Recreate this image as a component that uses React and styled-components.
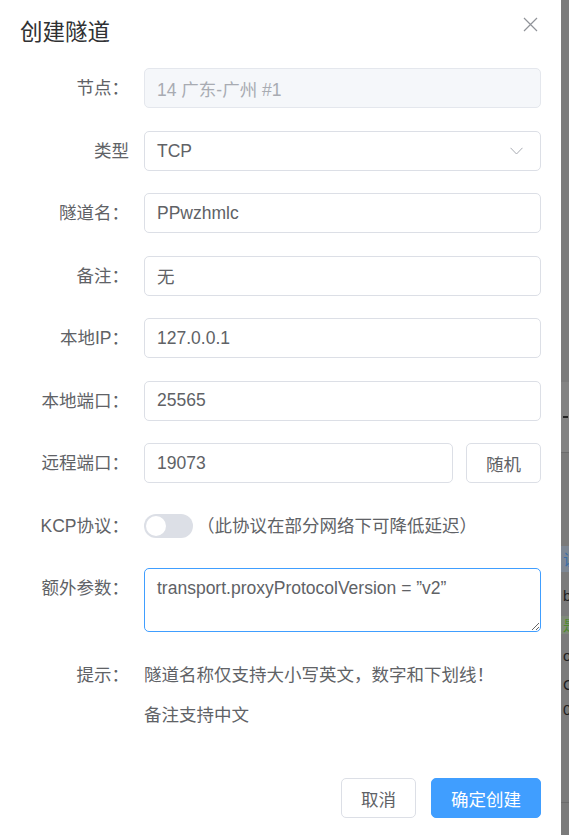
import React from 'react';
import styled, { createGlobalStyle } from 'styled-components';

const Global = createGlobalStyle`
  html, body { margin: 0; padding: 0; }
  body {
    font-family: "Liberation Sans", "Noto Sans CJK SC", sans-serif;
    background: #7b7b7b;
  }
`;

const Screen = styled.div`
  display: flex;
  height: 835px;
  overflow: hidden;
`;

const Dialog = styled.div`
  width: 561px;
  flex: none;
  background: #fff;
  display: flex;
  flex-direction: column;
`;

const Header = styled.div`
  position: relative;
  padding: 18px 20px 20px;
`;

const Title = styled.div`
  font-size: 22.5px;
  line-height: 30px;
  color: #303133;
`;

const Close = styled.button`
  position: absolute;
  top: 17px;
  right: 23px;
  width: 15px;
  height: 15px;
  padding: 0;
  border: 0;
  background: none;
  display: flex;
  cursor: pointer;
`;

const Body = styled.div`
  padding: 0 20px;
`;

const Item = styled.div`
  display: flex;
  align-items: flex-start;
  margin-bottom: 22.5px;
`;

const Label = styled.label`
  width: 124px;
  flex: none;
  box-sizing: border-box;
  padding-right: 15px;
  text-align: right;
  font-size: 17.5px;
  line-height: 40px;
  color: #606266;
`;

const Content = styled.div`
  flex: 1;
  min-width: 0;
  display: flex;
  flex-direction: ${p => (p.$column ? 'column' : 'row')};
  align-items: ${p => (p.$column ? 'flex-start' : 'center')};
  min-height: 40px;
  gap: ${p => (p.$column ? '0' : '13px')};
  font-size: 17.5px;
  line-height: 40px;
  color: #606266;
`;

const Field = styled.input`
  flex: 1;
  min-width: 0;
  box-sizing: border-box;
  height: 40px;
  padding: 0 12px;
  border: 1px solid ${p => (p.$disabled ? '#e4e7ed' : '#dcdfe6')};
  border-radius: 5px;
  background: ${p => (p.$disabled ? '#f5f7fa' : '#fff')};
  color: ${p => (p.$disabled ? '#a8abb2' : '#606266')};
  font-family: inherit;
  font-size: 17.5px;
  outline: none;
`;

const Select = styled.div`
  flex: 1;
  box-sizing: border-box;
  height: 40px;
  padding: 0 17px 0 12px;
  border: 1px solid #dcdfe6;
  border-radius: 5px;
  display: flex;
  align-items: center;
  justify-content: space-between;
  color: #606266;
  font-size: 17.5px;
`;

const Area = styled.textarea`
  flex: 1;
  box-sizing: border-box;
  height: 64px;
  padding: 6px 12px;
  border: 1px solid #409eff;
  border-radius: 5px;
  resize: vertical;
  color: #606266;
  font-family: inherit;
  font-size: 17.5px;
  line-height: 1.5;
  outline: none;
`;

const Switch = styled.span`
  position: relative;
  flex: none;
  width: 49px;
  height: 24px;
  border-radius: 12px;
  background: #dcdfe6;
  &::after {
    content: '';
    position: absolute;
    top: 2px;
    left: 2px;
    width: 20px;
    height: 20px;
    border-radius: 50%;
    background: #fff;
  }
`;

const SwitchText = styled.span`
  margin-left: -9px;
  color: #606266;
`;

const Button = styled.button`
  flex: none;
  box-sizing: border-box;
  height: 40px;
  padding: 0 19px;
  border-radius: 5px;
  border: 1px solid ${p => (p.$primary ? '#409eff' : '#dcdfe6')};
  background: ${p => (p.$primary ? '#409eff' : '#fff')};
  color: ${p => (p.$primary ? '#fff' : '#606266')};
  font-family: inherit;
  font-size: 17.5px;
  cursor: pointer;
`;

const Footer = styled.div`
  display: flex;
  justify-content: flex-end;
  gap: 15px;
  padding: 21px 20px 20px;
`;

const Strip = styled.div`
  flex: 1;
  overflow: hidden;
  display: flex;
  flex-direction: column;
  background: #7b7b7b;
`;

const Band = styled.div`
  flex: none;
  height: ${p => p.$h}px;
  background: ${p => p.$bg || 'transparent'};
  border-bottom: ${p => (p.$line ? '1px solid #6c6c6c' : '0')};
  display: flex;
  align-items: center;
  padding-left: ${p => p.$pl || 2}px;
  font-size: 15px;
  line-height: 1;
  color: ${p => p.$c || '#1e1e1e'};
  white-space: nowrap;
`;

const Dash = styled.span`
  width: 5px;
  height: 2px;
  background: #222;
`;

const fields = [
  { label: '隧道名：', value: 'PPwzhmlc' },
  { label: '备注：', value: '无' },
  { label: '本地IP：', value: '127.0.0.1' },
  { label: '本地端口：', value: '25565' },
];

export default function App() {
  return (
    <Screen>
      <Global />
      <Dialog>
        <Header>
          <Title>创建隧道</Title>
          <Close aria-label="close">
            <svg width="15" height="15" viewBox="0 0 15 15">
              <path d="M1 1 L14 14 M14 1 L1 14" stroke="#909399" strokeWidth="1.2" fill="none" />
            </svg>
          </Close>
        </Header>
        <Body>
          <Item>
            <Label>节点：</Label>
            <Content>
              <Field $disabled readOnly defaultValue="14 广东-广州 #1" />
            </Content>
          </Item>
          <Item>
            <Label>类型</Label>
            <Content>
              <Select>
                <span>TCP</span>
                <svg width="13" height="8" viewBox="0 0 13 8">
                  <path d="M0.5 0.8 L6.5 7 L12.5 0.8" stroke="#a8abb2" strokeWidth="1" fill="none" />
                </svg>
              </Select>
            </Content>
          </Item>
          {fields.map(f => (
            <Item key={f.label}>
              <Label>{f.label}</Label>
              <Content>
                <Field readOnly defaultValue={f.value} />
              </Content>
            </Item>
          ))}
          <Item>
            <Label>远程端口：</Label>
            <Content>
              <Field readOnly defaultValue="19073" />
              <Button>随机</Button>
            </Content>
          </Item>
          <Item>
            <Label>KCP协议：</Label>
            <Content>
              <Switch />
              <SwitchText>（此协议在部分网络下可降低延迟）</SwitchText>
            </Content>
          </Item>
          <Item>
            <Label>额外参数：</Label>
            <Content>
              <Area readOnly defaultValue={'transport.proxyProtocolVersion = ”v2”'} />
            </Content>
          </Item>
          <Item>
            <Label>提示：</Label>
            <Content $column>
              <div>隧道名称仅支持大小写英文，数字和下划线！</div>
              <div>备注支持中文</div>
            </Content>
          </Item>
        </Body>
        <Footer>
          <Button>取消</Button>
          <Button $primary>确定创建</Button>
        </Footer>
      </Dialog>
      <Strip>
        <Band $h={382} />
        <Band $h={70} $bg="#838383" $line>
          <Dash />
        </Band>
        <Band $h={93} />
        <Band $h={26} $bg="#7d8794" $c="#3a6ea8">访</Band>
        <Band $h={14} />
        <Band $h={18} $c="#1e1e1e">b</Band>
        <Band $h={12} />
        <Band $h={18} $bg="#7f8a7a" $c="#4e8a2e">是</Band>
        <Band $h={14} />
        <Band $h={14}>o</Band>
        <Band $h={13} />
        <Band $h={18}>C</Band>
        <Band $h={5} />
        <Band $h={22}>0</Band>
        <Band $h={82} $line />
      </Strip>
    </Screen>
  );
}
